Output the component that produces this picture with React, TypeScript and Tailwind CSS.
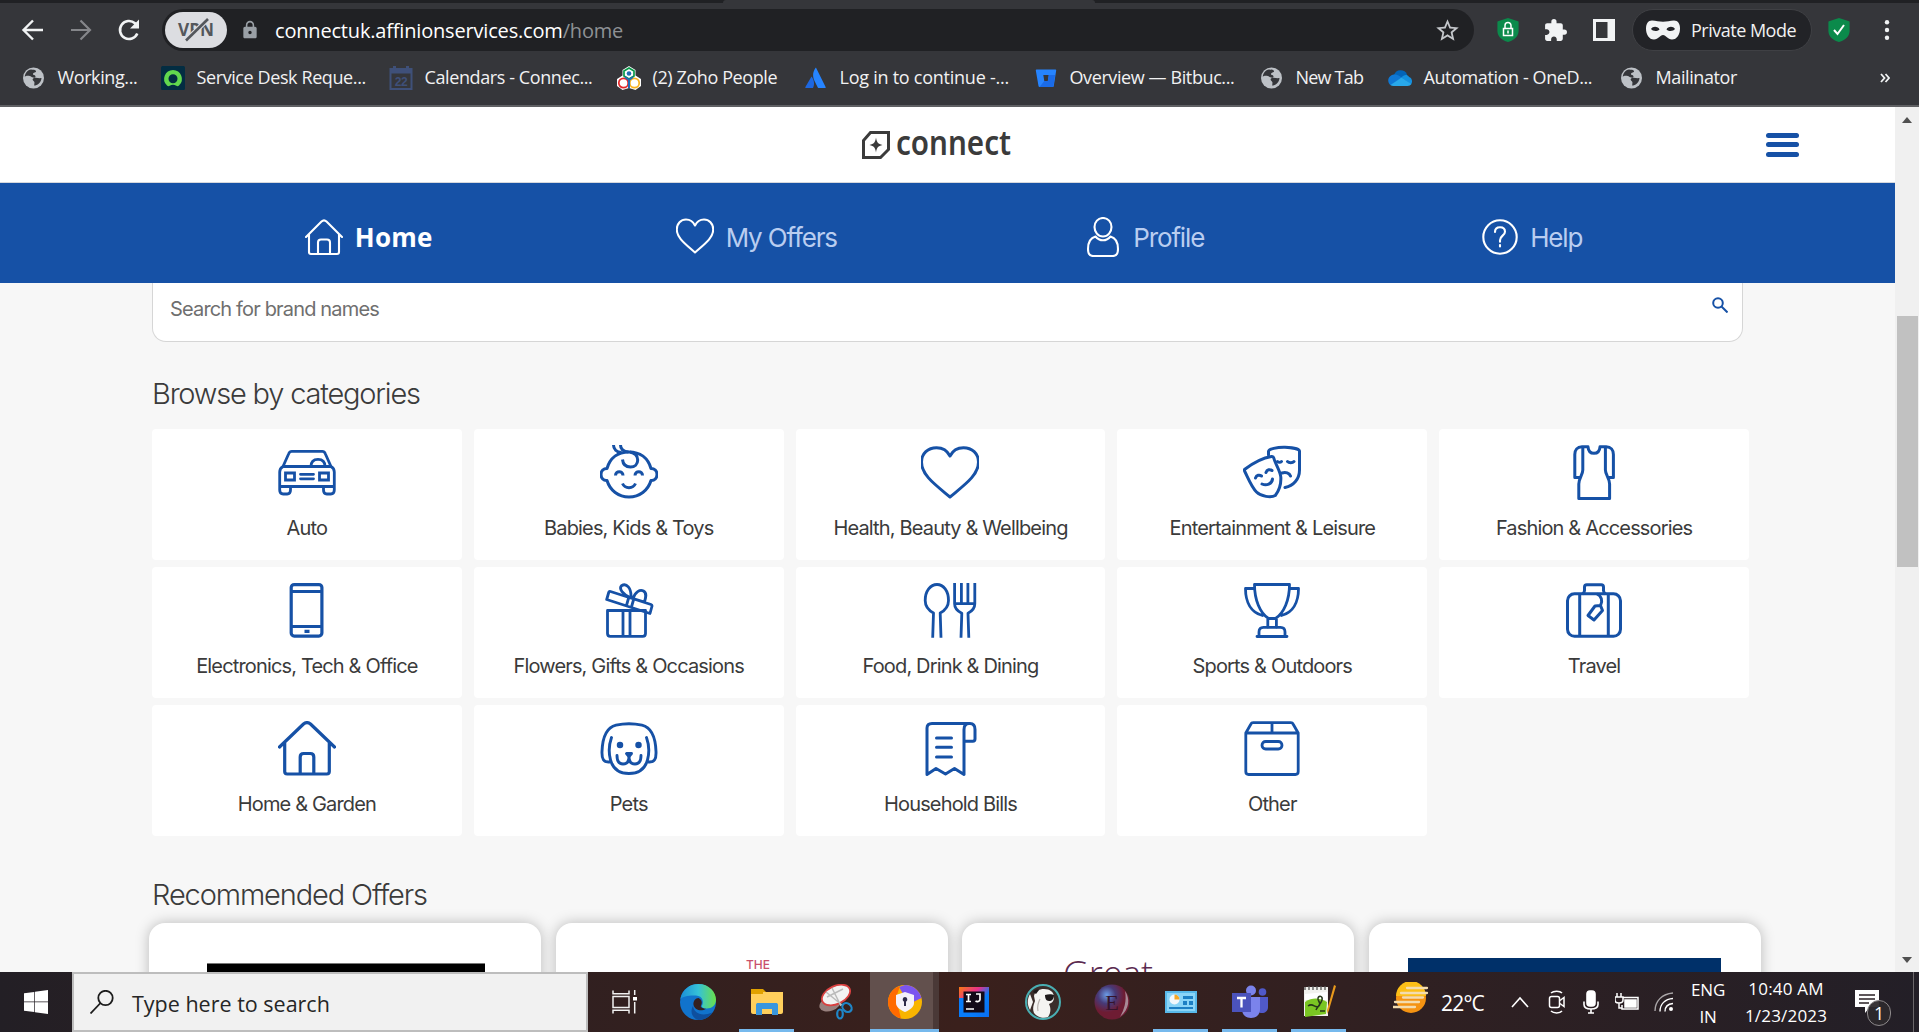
import React from "react";
import { MdExtension, MdStarBorder, MdLock } from "react-icons/md";

const ui = "font-['Open_Sans','Noto_Sans',sans-serif]";

function Globe() {
  return (
    <svg viewBox="0 0 24 24" className="size-6">
      <circle cx="11.500" cy="12" r="10.500" fill="#bdc1c6" />
      <path d="M9 3.500c2 .3 4.500 0 5 1.500s-3 1.500-3 3 2.500.5 2.500 2.500-3.500 1-4.500 0S3 9.500 2.800 11C3 7 5.500 4 9 3.500zM12 12c2.500-.5 5 .5 7.500 0-.3 4-3 7-7 7.700-.8-1.700 1-3.200-1-4.700-1.500-1.200-1-2.700.5-3z" fill="#35363a" />
    </svg>
  );
}
function DeskIcon() {
  return (
    <svg viewBox="0 0 24 24" className="size-6">
      <rect width="24" height="24" rx="1.500" fill="#032d42" />
      <path d="M12 4a9 9 0 0 0-6 15.600c.8.7 1.800.7 2.700.2a6.600 6.600 0 0 1 6.600 0c.9.5 2 .5 2.700-.2A9 9 0 0 0 12 4zm0 13.200a4.500 4.500 0 1 1 0-9 4.500 4.500 0 0 1 0 9z" fill="#62d84e" />
    </svg>
  );
}
function CalIcon() {
  return (
    <svg viewBox="0 0 24 24" className="size-6">
      <path d="M1.500 3h21v20h-21z" fill="none" stroke="#3f5079" strokeWidth="2" />
      <path d="M1 2.500h22v5H1zM4 0h3v3H4zM17 0h3v3h-3z" fill="#3f5079" />
      <text x="12" y="19.500" textAnchor="middle" fontSize="12" fontWeight="700" fontFamily="Liberation Sans" fill="#3f5079">22</text>
    </svg>
  );
}
function ZohoIcon() {
  return (
    <svg viewBox="0 0 24 24" className="size-6">
      <path d="M12 0l6.500 4v5.500L24 13v7l-5.500 4-6.500-2-6.500 2L0 20v-7l5.500-3.500V4z" fill="#fff" />
      <g fill="none" strokeWidth="1.700">
        <circle cx="6.500" cy="17" r="4.700" stroke="#e42527" />
        <circle cx="17.500" cy="17" r="4.700" stroke="#f9b21d" />
        <path d="M12 2l5 3v5l-5 3-5-3V5z" stroke="#089949" />
        <path d="M12 22v-8M12 14l-4-3M12 14l4-3" stroke="#226db4" strokeWidth="2" />
      </g>
      <circle cx="12" cy="7.500" r="2.300" fill="#226db4" />
    </svg>
  );
}
function AtlassianIcon() {
  return (
    <svg viewBox="0 0 24 24" className="size-6">
      <path d="M7.500 10.500c2.500 3 3.500 7.500 1.500 11.500H2c-.6 0-.9-.5-.6-1z" fill="#1d67e0" />
      <path d="M11.300 2.200c-3 4.500-2.800 9 0 14.300l2.500 5c.2.400.5.500 1 .5H21c.6 0 .9-.5.6-1L12.300 2.200c-.2-.5-.7-.5-1 0z" fill="#2684ff" />
    </svg>
  );
}
function BitbucketIcon() {
  return (
    <svg viewBox="0 0 24 24" className="size-6">
      <path fillRule="evenodd" d="M2.500 3.500h19c.5 0 .8.400.7.900l-2.500 15.800c-.1.500-.4.800-.9.800H5.500c-.5 0-.9-.3-1-.9L1.800 4.400c-.1-.5.200-.9.700-.9zM9.300 9l1 6h3.500l1-6z" fill="#2684ff" />
      <path d="M14.800 9h6.300l-1.700 11.200c-.1.500-.4.800-.9.800H5.500L10.300 15h3.500z" fill="#1a6be8" />
    </svg>
  );
}
function OneDriveIcon() {
  return (
    <svg viewBox="0 0 24 24" className="size-6">
      <path d="M6 9a7 7 0 0 1 13-.500l-2 7z" fill="#0364b8" />
      <path d="M6 8.500c3-.5 5 1 8 3L3 19.500C-1.500 16.500-.5 9.500 6 8.500z" fill="#0f78d4" />
      <path d="M13.500 11.500c2-3 6-3.500 7.500-.5 3 .5 4 5 2 7.500z" fill="#1490df" />
      <path d="M2.500 19l11-7.500 9.800 6.500c-.7 1.300-2 2-3.800 2H5.500c-1.200 0-2.200-.3-3-1z" fill="#28a8ea" />
    </svg>
  );
}

const bookmarks = [
  { label: "Working...", icon: <Globe />, cls: "w-[139px]" },
  { label: "Service Desk Reque...", icon: <DeskIcon />, cls: "w-[228px]" },
  { label: "Calendars - Connec...", icon: <CalIcon />, cls: "w-[228px]" },
  { label: "(2) Zoho People", icon: <ZohoIcon />, cls: "w-[187px]" },
  { label: "Log in to continue -...", icon: <AtlassianIcon />, cls: "w-[230px] tracking-[-0.25px]" },
  { label: "Overview — Bitbuc...", icon: <BitbucketIcon />, cls: "w-[226px]" },
  { label: "New Tab", icon: <Globe />, cls: "w-[128px] tracking-[-0.8px]" },
  { label: "Automation - OneD...", icon: <OneDriveIcon />, cls: "w-[232px]" },
  { label: "Mailinator", icon: <Globe />, cls: "w-[136px]" },
];

function Shield({ children }: { children: React.ReactNode }) {
  return (
    <svg viewBox="0 0 22 24" className="h-6 w-[22px] shrink-0">
      <path d="M11 0l10 3.200c.4 0 .6.400.6.800v9c0 5-4 9-10.600 11C4.400 22 .4 18 .4 13V4c0-.4.200-.8.600-.8z" fill="#0b8a4b" />
      {children}
    </svg>
  );
}

function BrowserChrome() {
  return (
    <header className={`h-[107px] shrink-0 border-b-2 border-[#5f6063] bg-[#35363a] text-[#f1f1f2] ${ui}`}>
      <div className="flex h-[3px] bg-[#202124]">
        <div className="ml-[723px] w-[372px] rounded-t-sm bg-[#35363a]" />
      </div>
      <div className="flex h-[54px] items-center pl-[21px]">
        <svg viewBox="0 0 24 24" className="size-6" fill="none" stroke="#f1f3f4" strokeWidth="2.400"><path d="M22 12H3M12 2.500L2.500 12l9.500 9.500" /></svg>
        <svg viewBox="0 0 24 24" className="ml-6 size-6" fill="none" stroke="#85868a" strokeWidth="2.200"><path d="M2 12h18M11.500 2.500L21 12l-9.500 9.500" /></svg>
        <svg viewBox="0 0 24 24" className="ml-6 size-6" fill="none" stroke="#f1f3f4" strokeWidth="2.600"><path d="M20.300 15.500A9 9 0 1 1 18 5.300L20.500 8" /><path d="M22 1.500v9h-9z" fill="#f1f3f4" stroke="none" /></svg>
        <div className="ml-[21px] flex h-[42px] w-[1312px] items-center rounded-full bg-[#202124] pl-[3px]">
          <div className="flex h-9 w-[62px] items-center justify-center rounded-full bg-[#dcdde1]">
            <svg viewBox="0 0 38 24" className="h-6 w-[38px]">
              <text x="19" y="18" textAnchor="middle" fontSize="18" fontWeight="700" textLength="36" lengthAdjust="spacingAndGlyphs" fontFamily="Open Sans" fill="#54575c">VPN</text>
              <path d="M9 22.500L31 1" stroke="#dcdde1" strokeWidth="5" />
              <path d="M9 22.500L31 1" stroke="#54575c" strokeWidth="2.600" />
            </svg>
          </div>
          <MdLock className="ml-[13px] size-5 text-[#9aa0a6]" />
          <span className="ml-[15px] mt-[2px] text-[20px] tracking-[-0.18px] text-white">connectuk.affinionservices.com<span className="text-[#8e9195]">/home</span></span>
          <MdStarBorder className="ml-auto mr-[13px] size-[27px] text-[#c4c7cb]" />
        </div>
        <div className="flex items-center pl-[23px]">
          <Shield>
            <path d="M6.500 10.500h9v7h-9z" fill="none" stroke="#fff" strokeWidth="1.500" />
            <path d="M8 10V7.500a3 3 0 0 1 6 0V10M11 12.500v3" fill="none" stroke="#fff" strokeWidth="1.500" />
          </Shield>
          <MdExtension className="ml-6 size-[25px] text-[#f1f3f4]" />
          <svg viewBox="0 0 22 22" className="ml-[25px] size-[22px]"><path d="M1.500 1.500h19v19h-19z" fill="#35363a" stroke="#f1f3f4" strokeWidth="3" /><path d="M14.500 1h6v20h-6z" fill="#f1f3f4" /></svg>
          <div className="ml-[17px] flex h-[42px] w-[180px] items-center rounded-full border border-[#3f4044] bg-[#222327] pl-[13px]">
            <svg viewBox="0 0 34 20" className="h-5 w-[34px]"><path fillRule="evenodd" d="M6 .5c4 0 7 1.300 11 1.300S24 .5 28 .5c4 0 6 3.500 6 8 0 6-3 11-8 11-4.500 0-6-4.500-9-4.500s-4.500 4.500-9 4.500c-5 0-8-5-8-11 0-4.500 2-8 6-8zM5 9c1.500 2 5.500 3 8.500.5-1-3-6.500-4-8.500-.5zm24 0c-2-3.500-7.500-2.500-8.500.5 3 2.500 7 1.500 8.500-.5z" fill="#f1f3f4" /></svg>
            <span className="ml-[11px] whitespace-nowrap text-[18px] tracking-[-0.5px]">Private Mode</span>
          </div>
          <div className="ml-4 flex"><Shield><path d="M6 12l3.500 4L16 7" fill="none" stroke="#fff" strokeWidth="2" /></Shield></div>
          <svg viewBox="0 0 6 20" className="ml-[34px] h-5 w-1.5" fill="#f1f3f4"><circle cx="3" cy="2.300" r="2.200" /><circle cx="3" cy="10" r="2.200" /><circle cx="3" cy="17.700" r="2.200" /></svg>
        </div>
      </div>
      <div className="flex h-[41px] items-center pl-[21.500px] text-[18px] tracking-[-0.400px]">
        {bookmarks.map((b, i) => (
          <div key={i} className={`flex shrink-0 items-center gap-3 whitespace-nowrap ${b.cls}`}>
            {b.icon}
            <span>{b.label}</span>
          </div>
        ))}
        <svg viewBox="0 0 10 10" className="ml-auto mr-[29px] size-[10px]" fill="none" stroke="#f1f3f4" strokeWidth="1.800"><path d="M1 1l3.500 4L1 9M5.500 1L9 5 5.500 9" /></svg>
      </div>
    </header>
  );
}

const line = { fill: "none", stroke: "currentColor", strokeWidth: 3, strokeLinecap: "round", strokeLinejoin: "round" } as const;

function Glyph({ children }: { children: React.ReactNode }) {
  return <svg viewBox="-1 0 58 56" className="h-14 w-[58px] text-[#1651a6]" {...line}>{children}</svg>;
}

const categories = [
  { name: "Auto", icon: <g strokeWidth="2.800"><path d="M4 21.500L9.800 8.500c.7-1.700 1.500-2.200 3-2.200h30.500c1.500 0 2.300.5 2.900 2.200L52 21.500zM4 21.500C1.500 23 .7 24.500.7 27v14.500h54.600V27c0-2.500-.8-4-3.300-5.500M.7 41.500V45c0 2.500 1.300 4 3.500 4h4c2.200 0 3.300-1.500 3.300-4v-3.500M44.500 41.500V45c0 2.500 1.100 4 3.300 4h4c2.200 0 3.500-1.500 3.500-4v-3.500M32 21.500c0-4.500 2.500-7.200 7-7.200s7 2.700 7 7.200" /><path strokeLinejoin="miter" d="M6.500 28h9v7h-9zM40.500 28h9v7h-9zM21.500 29.300h13M21.500 33.800h13" /></g> },
  { name: "Babies, Kids & Toys", icon: <g strokeLinecap="butt"><path d="M6 23.500C9 13 17 7 28 7s19 6 22 16.500c3.500 0 6 2.300 6 6s-2.500 6.300-6 6C47 45.500 38.500 52 28 52S9 45.500 6 35.500c-3.500.3-6-2.300-6-6s2.500-6 6-6z" /><path d="M12.500 0c0 4 3 7 8 7.500M19.500 0c0 4 3 6.500 8 7M29 7c5 1 7.700 4 7.700 8 0 4.200-3 7-7.200 7-4.500 0-7.500-2.500-8-7.500M14.500 30.500c0-5 7.500-5 7.500 0M34 30.500c0-5 7.500-5 7.500 0M21.500 38.500c2.500 5.500 10.500 5.500 13 0" /></g> },
  { name: "Health, Beauty & Wellbeing", icon: <path d="M28 52C13 39.500-.5 30-.5 17 -.5 8.500 6 2.700 14.500 2.700 21 2.700 25.500 6 28 11c2.500-5 7-8.300 13.500-8.300C50 2.700 56.500 8.500 56.500 17 56.500 30 43 39.500 28 52z" /> },
  { name: "Entertainment & Leisure", icon: <g><path d="M.5 24.500C9 18 18 13 27.500 11.500c1.500-.2 2 .2 2.300 1.500 1.500 6 6.500 13 7 19 .5 8-2 14-5.500 18.500C27 53 17 51.500 12.500 47 7.500 42 4.500 34 .8 26.500c-.5-1-.8-1.500-.3-2z" /><path d="M24.500 10V6.500C24.500 4 33 2 41 2.200c7 .2 14.500 1.800 14.500 4V25c0 9-6 16-14.500 17.500M11.500 33c1-3 4-3.500 6-2M22 27.500c1-3 4-3.500 6-2M18 39c4.500 2 10 0 10.500-5M33.500 16.500c1 1 3 1 4 0M43.500 16.500c1.500 1.700 5 1.700 6.500 0M38 28c3.500-1.500 7.500 0 8.500 3" /></g> },
  { name: "Fashion & Accessories", icon: <g strokeLinecap="butt"><path d="M16.800 2v23c0 5-4 8-4 14v14.500h30.800V39c0-6-4.200-9-4.200-14V2" /><path d="M14.500 32.500H8.800V9.500c0-4.500 2.500-7.700 7.200-7.700h6c.3 4 2.500 6.500 6 6.500s5.700-2.500 6-6.500h6.200c4.700 0 7.200 3.200 7.200 7.700v23H42" /></g> },
  { name: "Electronics, Tech & Office", icon: <g strokeWidth="3.200" strokeLinecap="butt"><rect x="12.200" y="1.600" width="30.700" height="51.500" rx="3" /><path d="M12 8.500h31M12 43.500h31M25.500 48.300h5" /></g> },
  { name: "Flowers, Gifts & Occasions", icon: <g strokeWidth="2.800"><path strokeLinecap="butt" d="M6.500 27.500h38v23c0 1.800-1 2.800-2.800 2.800H9.300c-1.800 0-2.800-1-2.800-2.800zM22 28v25M29 28v25" /><path d="M9.500 8.500l40.500 13c1 .4 1.200 1 .9 2L49 30.500 5.700 16.500l2-7c.3-1 .9-1.300 1.800-1zM27.600 15l-2 7M32.600 16.500l-2 7M29 14.500C22 11 17.500 6 20.500 2.700 25.500-.5 30.500 5 30 14.500zM32 15.500c2-6.500 7-9.500 10.500-7.500s2.500 6 1 11z" /></g> },
  { name: "Food, Drink & Dining", icon: <g strokeWidth="2.800" strokeLinecap="butt"><path d="M10.700 54.700L11.500 30C6 27 3.200 23.500 3.200 17.500 3.200 8 8.500 1.500 15 1.500S26.500 8 26.500 17.500c0 6-2.800 9.500-8.300 12.500l.8 24.700" /><path d="M32.600 0v20.700c0 4.500 3 7.500 7.200 9.500L39 54.700M52.800 0v20.700c0 4.500-2.800 7.500-6.800 9.500l.8 24.500M39.400 0v20M45.900 0v20M32.600 20.700h20.200" /></g> },
  { name: "Sports & Outdoors", icon: <g strokeWidth="2.800"><path d="M10.500 1.500h35C45.500 17 40 30 31.500 35.500h-7C16 30 10.500 17 10.500 1.500zM10.500 5.500h-9C1.500 19 7 29.500 18.500 32.500M45.500 5.500h9C54.500 19 49 29.500 37.500 32.500M23.800 36v8M32.400 36v8" /><path d="M15 53v-4c0-3 1.500-4.700 4.500-4.700h17c3 0 4.500 1.700 4.500 4.700v4M13 53.500h30" /></g> },
  { name: "Travel", icon: <g strokeLinecap="butt"><rect x="1.500" y="10.800" width="53" height="42.500" rx="7" /><path d="M13.700 11v42M42.300 11v42M16.500 11c1.500-1 2-1.500 2-3.500V4c0-1.500.8-2.300 2.300-2.300h14.400c1.500 0 2.300.8 2.300 2.300v3.500c0 2 .5 2.500 2 3.500M31 11c4.500 2 6 7 3.500 11.500M29 23l5.500-.5 2 5L28 37l-6-4.500z" /></g> },
  { name: "Home & Garden", icon: <g strokeWidth="3.200"><path d="M.5 26L24.500 3c2.500-2 4.500-2 7 0l24 23M5.700 22v28.500c0 1.700.8 2.500 2.500 2.500h39.600c1.700 0 2.500-.8 2.500-2.500V22M21.200 52V36c0-2.500 1-3.500 3.500-3.500h6.600c2.500 0 3.500 1 3.500 3.500v16" /></g> },
  { name: "Pets", icon: <g strokeWidth="2.900"><path d="M8.500 41C2.500 41.500.7 38 1 30.500 1.500 17 5.500 6.500 15 4.200c7.500-1.700 18.500-1.700 26 0C50.500 6.500 54.500 17 55 30.500c.3 7.500-1.500 11-7.500 10.500" /><path d="M10.500 16.500c-2.500 7-3.300 14-1 22.500C12 48 19 52.500 28 52.500S44 48 46.500 39c2.300-8.500 1.500-15.500-1-22.500" /><path d="M16 34.500c0 5.500 2 8.500 6 8.500s6-2 6-7c0 5 2 7 6 7s6-3 6-8.500" /><path d="M25.500 32.500h5L28 35.500z" fill="currentColor" /><circle cx="19" cy="24" r="1.800" fill="currentColor" /><circle cx="37.500" cy="24" r="1.800" fill="currentColor" /></g> },
  { name: "Household Bills", icon: <g><path d="M48 2.500H10c-3.300 0-5 1.500-5 4.500v46.500l9-6 9.500 5.500 9-5.500 9.500 6V8.500c0-4 2-6 5-6h1c3.300 0 5 2 5 6V18c0 1.500-.7 2.200-2.200 2.200H43" /><path d="M14.500 17h15M14.500 26.300h15M14.500 36h15" /></g> },
  { name: "Other", icon: <g strokeWidth="2.800"><path d="M1.800 12v38.500c0 2 .8 3 2.800 3h46.800c2 0 2.800-1 2.800-3V12zL6.800 3.200c.5-1 1-1.500 2.300-1.500h37.800c1.300 0 1.800.5 2.300 1.500l5 8.800M28 2v10" /><rect x="18" y="20.500" width="20" height="7.500" rx="3.700" /></g> },
];

const navIcons = {
  home: <path d="M1 20L16.500 4.500c1.800-1.700 3.200-1.700 5 0L37 20M4 17.500V35c0 1.300.7 2 2 2h26c1.300 0 2-.7 2-2V17.500M13 37V25.500c0-2 1-3 3-3h6c2 0 3 1 3 3V37" />,
  heart: <path d="M19 35.500C9.500 27 .8 21 .8 12.500.8 6.500 5 2.500 10 2.500c4 0 7.300 2.500 9 6 1.700-3.500 5-6 9-6 5 0 9.200 4 9.200 10C37.200 21 28.500 27 19 35.500z" />,
  profile: <path d="M20 1c5 0 8.500 4 8.500 9S25 19.500 20 19.500 11.500 15 11.500 10 15 1 20 1zM12.500 19.500C7 21 5 26 5 32c0 4.500 1.500 7 5 7h20c3.500 0 5-2.500 5-7 0-6-2-11-7.500-12.500-4 5-11 5-15 0z" />,
  help: <><circle cx="20" cy="20" r="16.700" /><path d="M15 15c0-3 2-4.800 5-4.800s5 1.800 5 4.500c0 4-5 4-5 8.500v1.500M20 28v1.500" /></>,
};

const nav = [
  { name: "Home", icon: navIcons.home, active: true },
  { name: "My Offers", icon: navIcons.heart, active: false },
  { name: "Profile", icon: navIcons.profile, active: false },
  { name: "Help", icon: navIcons.help, active: false },
];

function Page() {
  return (
    <main className="relative flex min-w-0 flex-1 flex-col overflow-hidden bg-[#f7f7f7] font-['Inter',sans-serif] text-[#3b3b3b]">
      <div className="flex h-[76px] shrink-0 items-center border-b border-[#d5d8dd] bg-white pr-24">
        <div className="flex flex-1 items-center gap-1.5 pl-[862px]">
          <svg viewBox="0 0 28 28" className="size-7" fill="none" stroke="#3b3b3b" strokeWidth="3"><path d="M8.500 1.500h18v17l-8 8H1.500v-17z" /><path d="M14 6.500c.8 4.700 2 6.500 6.500 7.500-4.500 1-5.700 2.800-6.500 7.500-.8-4.700-2-6.500-6.500-7.500C12 13 13.200 11.200 14 6.500z" fill="#3b3b3b" stroke="none" /></svg>
          <span className="-mt-1.5 inline-block origin-left scale-x-[0.87] font-['Noto_Sans','Open_Sans',sans-serif] text-[34px] font-semibold leading-none">connect</span>
        </div>
        <div className="flex w-[33px] flex-col gap-[4.500px]">
          <div className="h-[5px] rounded-sm bg-[#1651a6]" />
          <div className="h-[5px] rounded-sm bg-[#1651a6]" />
          <div className="h-[5px] rounded-sm bg-[#1651a6]" />
        </div>
      </div>
      <nav className="grid h-[100px] shrink-0 grid-cols-4 bg-[#1651a6] pl-[175px] pr-[170px] text-[26px] tracking-[-1.150px]">
        {nav.map((n) => (
          <div key={n.name} className="flex items-center justify-center gap-3 pt-[7px]">
            <svg viewBox="0 0 38 40" className="h-10 w-[38px] text-white" {...line} strokeWidth={2.100}>{n.icon}</svg>
            <span className={n.active ? "pt-px font-['Open_Sans',sans-serif] font-bold tracking-[0.300px] text-white" : "pt-px text-[#b9cdf0]"}>{n.name}</span>
          </div>
        ))}
      </nav>
      <div className="ml-[152px] flex h-[59px] w-[1591px] shrink-0 items-start justify-between rounded-b-[14px] border border-t-0 border-[#d6d6d6] bg-white pl-[17px] pr-[14px] text-[20px] text-[#6f6f6f]">
        <span className="mt-[11px] tracking-[-0.840px]">Search for brand names</span>
        <svg viewBox="0 0 16 16" className="mt-[14px] size-4" fill="none" stroke="#1651a6" strokeWidth="2"><circle cx="6" cy="6" r="4.800" /><path d="M9.500 9.500l6 6" /></svg>
      </div>
      <h2 className="ml-[152px] mt-[30px] h-[57px] shrink-0 text-[29px] font-light leading-[44px] tracking-[-1.200px]">Browse by categories</h2>
      <div className="ml-[152px] grid w-[1597px] shrink-0 grid-cols-5 gap-x-3 gap-y-[7px]">
        {categories.map((c) => (
          <div key={c.name} className="flex h-[131px] flex-col items-center rounded bg-white pt-4">
            <Glyph>{c.icon}</Glyph>
            <span className="mt-3 text-[20px] leading-[30px] tracking-[-0.840px]">{c.name}</span>
          </div>
        ))}
      </div>
      <h2 className="ml-[152px] mt-[37px] h-[50px] shrink-0 text-[29px] font-light leading-[44px] tracking-[-1.130px]">Recommended Offers</h2>
      <div className="ml-[149px] flex w-[1612px] shrink-0 gap-[14.500px]">
        <div className="flex h-[200px] w-[392px] shrink-0 justify-center rounded-2xl bg-white pt-10 pl-0.5 shadow-[0_0_14px_rgba(0,0,0,0.25)]"><div className="w-[278px] border-t border-[#777] bg-black" /></div>
        <div className="flex h-[200px] w-[392px] shrink-0 justify-center rounded-2xl bg-white pt-[33px] shadow-[0_0_14px_rgba(0,0,0,0.25)]"><span className="mr-[-13px] text-[12px] font-medium text-[#c9506b]">THE</span></div>
        <div className="h-[200px] w-[392px] shrink-0 rounded-2xl bg-white pl-[101px] pt-[24px] shadow-[0_0_14px_rgba(0,0,0,0.25)]"><span className="font-['Open_Sans',sans-serif] text-[36px] font-light tracking-[-0.200px] text-[#5b2a50]">Great</span></div>
        <div className="flex h-[200px] w-[392px] shrink-0 justify-center rounded-2xl bg-white pt-[35px] shadow-[0_0_14px_rgba(0,0,0,0.25)]"><div className="w-[313px] bg-[#003069]" /></div>
      </div>
    </main>
  );
}

function Scrollbar() {
  return (
    <div className="flex w-6 shrink-0 flex-col items-center justify-between bg-[#f0f0f0]">
      <svg viewBox="0 0 10 6" className="mt-[10px] h-1.5 w-[10px]"><path d="M0 6L5 0l5 6z" fill="#505050" /></svg>
      <div className="mb-[197px] h-[251px] w-[21px] bg-[#c1c1c1]" />
      <svg viewBox="0 0 10 6" className="mb-[9px] h-1.5 w-[10px]"><path d="M0 0l5 6 5-6z" fill="#505050" /></svg>
    </div>
  );
}

const apps = [
  { id: "edge", state: "", icon: (
    <><defs><linearGradient id="e1" x1="0" x2="1"><stop offset="0" stopColor="#1b8fd8" /><stop offset=".5" stopColor="#35c1d8" /><stop offset="1" stopColor="#6ae04a" /></linearGradient></defs>
      <circle cx="18" cy="18" r="18" fill="#1173cc" /><path d="M.5 15C2 6 9.500 0 18.500 0 29 0 36 8 36 15.500c0 6-4.500 9-9 9-4 0-6-1.500-5-3 2-3 1-9.500-6-10C9 11 2.500 12.500.5 15z" fill="url(#e1)" /><path d="M13 22c1 7 8 11 19.500 6.500C29 33.500 24 36 18.500 36c-6-1.500-9-8-5.500-14z" fill="#0e4f9e" /><path d="M13.500 21c-.5-4 2-7 5-7 3.500 1.500 4 5 2.500 7.500-1 1.500 1 3 5 3.300C21 28 15 26 13.500 21z" fill="#35201f" /></>) },
  { id: "files", state: "open", icon: <><path d="M2 5h12l3 3H2z" fill="#e0a100" /><path d="M2 8h32v20c0 1-1 2-2 2H4c-1 0-2-1-2-2z" fill="#ffcf5c" /><path d="M2 5h12v5H2z" fill="#e0a100" /><path d="M7 31V21c0-1.500 1-2 2-2h18c1 0 2 .5 2 2v10h-6v-6H13v6z" fill="#3a96dd" /></> },
  { id: "snip", state: "", icon: <><ellipse cx="12" cy="20" rx="11" ry="7" fill="#98807e" transform="rotate(-20 12 20)" /><ellipse cx="18" cy="11" rx="15" ry="9" fill="#f3f3f3" stroke="#d94040" strokeWidth="1.800" transform="rotate(-25 18 11)" /><path d="M9 13l16-8M8 8l16 13M14 4l9 18" stroke="#bbb" strokeWidth="1.500" /><g fill="none" stroke="#1f86c8" strokeWidth="2.200"><ellipse cx="29" cy="23.500" rx="4" ry="5" transform="rotate(-50 29 23.500)" /><ellipse cx="22" cy="30" rx="2.800" ry="4.500" /></g></> },
  { id: "avast", state: "active", icon: <><circle cx="18" cy="18" r="17" fill="#f8b400" /><path d="M18 1a17 17 0 0 1 16.500 13L22 20 12 3z" fill="#7b55f0" /><path d="M13 2C3 5-1 15 2 24c2 5 6 9 12 10.500L9 14z" fill="#ff6a00" /><path d="M18 8l9 3v8c0 4-4 7-9 9-5-2-9-5-9-9v-8z" fill="#f4f1fa" /><path d="M18 13a2.500 2.500 0 0 1 1 4.700V22h-2v-4.300a2.500 2.500 0 0 1 1-4.700z" fill="#2d2a4a" /></> },
  { id: "ij", state: "", icon: <><defs><linearGradient id="j1" x1="0" y1="0" x2="1" y2="1"><stop offset="0" stopColor="#f97a12" /><stop offset=".35" stopColor="#e8308c" /><stop offset=".6" stopColor="#087cfa" /><stop offset="1" stopColor="#0a6ff0" /></linearGradient></defs><path d="M3 3h30v30H3z" fill="url(#j1)" /><path d="M3 14h7v14l13 5H3z" fill="#087cfa" /><path d="M7.500 7.500h21v21h-21z" fill="#120a18" /><path d="M10 10.500h5M12.500 10.500v7M10 17.500h5M20 10h4v5.500c0 2-3 2.500-4.500 1.500M10 25h8" fill="none" stroke="#fff" strokeWidth="1.700" /></> },
  { id: "beaver", state: "", icon: <><circle cx="18" cy="18" r="17" fill="#3a2d2a" stroke="#49aeb2" strokeWidth="2" /><path d="M9 12c1-5 5-7 10-7 6 0 10 3 10 8 0 4-2 6-5 7 2 4 2 9-1 13-5 2-11 0-14-4-2-5 0-9 1-12z" fill="#f4f4f2" /><path d="M20 11c3-1 7-1 9 0 0 4-2 6-5 6s-4-3-4-6zM8 8c1-2 4-3 6-2l-3 4z" fill="#1d191a" /><path d="M5 10c-3 5-3 11 0 16l3-8z" fill="#f4f4f2" /><path d="M15 15c-2 4-3 8-2 12" fill="none" stroke="#b9b4b0" strokeWidth="1.200" /></> },
  { id: "eclipse", state: "", icon: <><defs><radialGradient id="c1" cx=".35" cy=".3"><stop offset="0" stopColor="#6c9de8" /><stop offset=".5" stopColor="#473a78" /><stop offset="1" stopColor="#6e1c33" /></radialGradient></defs><circle cx="18" cy="18" r="17.500" fill="url(#c1)" /><path d="M31 7c5 7 5 18-5 26 4-7 7-16 5-26z" fill="#a88a96" /><text x="18" y="26" textAnchor="middle" fontSize="22" fontFamily="Liberation Serif" fill="#35132b">E</text></> },
  { id: "panel", state: "open", icon: <><path d="M2 7h32v22H2z" fill="#58b9ea" /><path d="M4 9h28v18H4z" fill="#8ad4f7" /><circle cx="11.500" cy="15.500" r="5" fill="#f2f8fc" /><path d="M11.500 10.500a5 5 0 0 1 5 5h-5z" fill="#f5a623" /><path d="M20 12h10v3H20zM20 17h4v4h-4zM26 17h4v4h-4zM6 23h24v2H6z" fill="#1c7fc4" /></> },
  { id: "teams", state: "open", icon: <><circle cx="19" cy="6.500" r="5" fill="#7b83eb" /><circle cx="30.500" cy="8" r="3.800" fill="#5059c9" /><path d="M24 13h12v10c0 4-3 6-6 6s-6-2-6-6z" fill="#5059c9" /><path d="M10 13h18v12c0 6-4 9-9 9s-9-3-9-9z" fill="#7b83eb" /><path d="M0 9h19v19H0z" fill="#4b53bc" /><path d="M5 14h9M9.500 14v9.500" stroke="#fff" strokeWidth="2.300" /></> },
  { id: "npp", state: "open", icon: <><path d="M3 3h24v29H3z" fill="#f2f2ee" /><path d="M4 10l22-2v8H4z" fill="#fff" /><path d="M4 3v3M8 2v4M12 2v4M16 2v4M20 2v4M24 2v4" stroke="#555" strokeWidth="1.300" /><path d="M4 18c8-5 15-4 22 0l-1 12-21 3z" fill="#7ac623" /><path d="M7 22c5-4 7 3 11 0 3-3-2-5-1-8s5-2 4 2-5 7-6 10M19 27h5" fill="none" stroke="#26361a" strokeWidth="1.500" /><path d="M35 2L28 26l-1.500 4-.5-4L33 1z" fill="#e99a1c" /></> },
];

function Taskbar() {
  return (
    <footer className={`flex h-[60px] shrink-0 bg-linear-to-r from-[#231f25] via-[#3a201c] via-50% to-[#231f27] text-white ${ui}`}>
      <div className="flex w-[72px] items-center justify-center">
        <svg viewBox="0 0 24 24" className="size-6" fill="#fff"><path d="M0 3.300l10.300-1.400v9.600H0zM11 1.800L24 0v11.500H11zM0 12.300h10.300V22L0 20.700zM11 12.300h13V24l-13-1.800z" /></svg>
      </div>
      <div className="flex w-[516px] items-center border-2 border-[#bdbdbd] bg-[#f1f1f1] pl-4 text-[#262626]">
        <svg viewBox="0 0 24 24" className="size-6" fill="none" stroke="#1c1c1c" strokeWidth="1.800"><circle cx="15.500" cy="8" r="7.200" /><path d="M10.500 13L.5 23.500" /></svg>
        <span className="ml-[18px] mt-[5px] text-[21.500px]">Type here to search</span>
      </div>
      <div className="flex w-[75px] items-center justify-center pr-[3px]">
        <svg viewBox="0 0 25 24" className="h-6 w-[25px]" fill="none" stroke="#f1f1f1" strokeWidth="1.500"><path d="M1 .5v3.200h16V.5M1 6.500h16v11H1zM1 23.500v-3.200h16v3.200M22.700 0v5M22.700 12v11.500" /><path d="M21 7h4v3.500h-4z" fill="#fff" stroke="none" /></svg>
      </div>
      {apps.map((a) => (
        <div key={a.id} className={`flex w-[69px] flex-col items-center ${a.state === "active" ? "bg-[#62504d] shadow-[inset_-6px_0_0_#4a3937]" : ""}`}>
          <svg viewBox="0 0 36 36" className="mt-3 size-9 shrink-0">{a.icon}</svg>
          <div className={a.state === "active" ? "mt-[9px] h-[3px] w-full bg-[#76b9ed]" : a.state === "open" ? "mt-[9px] h-[3px] w-[55px] bg-[#76b9ed]" : "hidden"} />
        </div>
      ))}
      <div className="flex flex-1 items-center">
        <svg viewBox="0 0 36 32" className="ml-[40px] -mt-2 h-8 w-9"><circle cx="18" cy="16" r="15" fill="#f59312" /><path d="M3 14A15 15 0 0 1 33 14z" fill="#fcbf17" /><path d="M14 6h20M8 11h26M2 20h24M0 25h22M10 15.500h20" stroke="#f3dcae" strokeWidth="2.300" strokeLinecap="round" /></svg>
        <span className="ml-3 mt-1 text-[21px] tracking-[-0.800px]">22°C</span>
        <svg viewBox="0 0 18 12" className="ml-[27px] h-3 w-[18px]" fill="none" stroke="#fff" strokeWidth="1.600"><path d="M1 11l8-9 8 9" /></svg>
        <svg viewBox="0 0 18 24" className="ml-[19px] h-6 w-[18px]" fill="none" stroke="#fff" strokeWidth="1.500"><rect x="1.500" y="6.500" width="10" height="11" rx="2" /><path d="M12 10.500l4-3v9l-4-3M3 3c2.500-2.500 9-2.500 11 0M3 21c2.500 2.500 9 2.500 11 0" /></svg>
        <svg viewBox="0 0 16 24" className="ml-[17px] h-6 w-4" fill="none" stroke="#fff" strokeWidth="1.600"><rect x="4" y="1" width="8" height="15" rx="3" fill="#fff" /><path d="M1 11.500v3c0 3 2 4.500 7 4.500s7-1.500 7-4.500v-3M8 19v4M5 23h6" /></svg>
        <svg viewBox="0 0 24 20" className="ml-4 h-5 w-6" fill="none" stroke="#fff" strokeWidth="1.500"><path d="M8 5.500h15V17H7v-4M2 1v4M6 1v4M0 5h8v3c0 2-2 3-4 3s-4-1-4-3zM4 11v5h3" /><path d="M10 8h11v7H10z" fill="#fff" /></svg>
        <svg viewBox="0 0 20 20" className="ml-[15px] h-5 w-5" fill="none" stroke="#fff" strokeWidth="1.400"><path d="M1 19C1 9 8 2 19 1" opacity=".6" /><path d="M6 19.500C6 12 11 7 19 6.500M11 19.500c0-4.500 3-7.500 8-8" /><circle cx="17" cy="17" r="2" fill="#fff" stroke="none" /></svg>
        <div className="ml-4 mt-px flex w-[36px] flex-col items-center text-[17px] leading-[27px] tracking-[-0.200px]"><span>ENG</span><span>IN</span></div>
        <div className="ml-[18px] flex w-[84px] flex-col items-center whitespace-nowrap text-[17px] leading-[27px] tracking-[0.200px]"><span>10:40 AM</span><span>1/23/2023</span></div>
        <div className="relative ml-[27px] h-9 w-9">
          <svg viewBox="0 0 36 36" className="size-9"><path d="M0 6h24v17h-9l-5 6v-6H0z" fill="#fff" /><path d="M4 11h16M4 15h16M4 19h10" stroke="#2a2024" strokeWidth="1.500" /></svg>
          <div className="absolute left-3 top-4 flex h-[26px] w-6 items-center justify-center rounded-full border border-[#8d898b] bg-[#2d292c]/95 text-[18px]">1</div>
        </div>
        <div className="ml-auto mr-[5px] h-full w-px bg-[#6b676a]" />
      </div>
    </footer>
  );
}

export default function App() {
  return (
    <div className="flex h-[1032px] w-[1919px] flex-col overflow-hidden">
      <BrowserChrome />
      <div className="flex min-h-0 flex-1">
        <Page />
        <Scrollbar />
      </div>
      <Taskbar />
    </div>
  );
}
